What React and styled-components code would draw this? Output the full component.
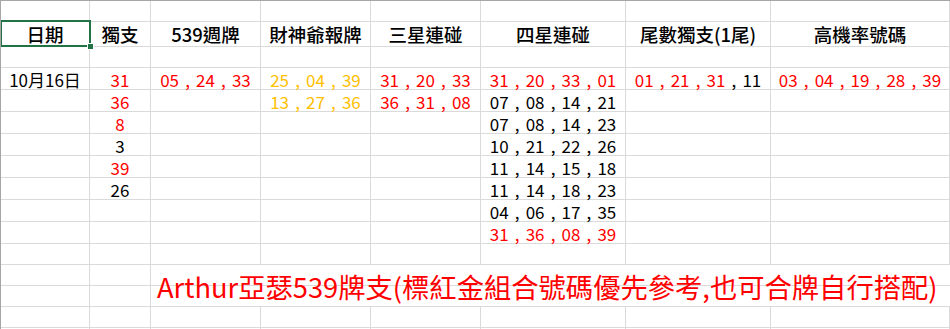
import React from 'react';
import styled, { createGlobalStyle, css } from 'styled-components';

const GlobalStyle = createGlobalStyle`
  html, body {
    margin: 0;
    padding: 0;
    background: #ffffff;
    overflow: hidden;
  }
  body {
    font-family: "Noto Sans CJK TC", "Microsoft JhengHei", sans-serif;
  }
`;

const colors = {
  r: '#ff0000',
  g: '#ffc000',
  k: '#000000',
};

const Sheet = styled.div`
  display: grid;
  grid-template-columns: 89px 61px 110px 110px 110px 145px 145px 1fr;
  grid-template-rows: 21px 25px 21px repeat(8, 22px) 21px 21px 21px 21px 40px;
  width: 950px;
  height: 329px;
  box-sizing: border-box;
  border-top: 1px solid #a6a6a6;
  border-left: 1px solid #a6a6a6;
  overflow: hidden;
`;

const Cell = styled.div`
  position: relative;
  box-sizing: border-box;
  border-right: 1px solid #dadada;
  border-bottom: 1px solid #dadada;
  display: flex;
  align-items: center;
  justify-content: center;
  white-space: nowrap;
  font-size: 17px;
  color: #000;
  line-height: 1;
  padding-top: 1px;

  ${(p) =>
    p.$head &&
    css`
      font-size: 18.5px;
      font-weight: 500;
    `}

  ${(p) =>
    p.$selected &&
    css`
      &::after {
        content: '';
        position: absolute;
        left: -1px;
        top: -2px;
        right: -2px;
        bottom: -1px;
        border: 2px solid #217346;
        pointer-events: none;
      }
      &::before {
        content: '';
        position: absolute;
        right: -5px;
        bottom: -4px;
        width: 5px;
        height: 5px;
        background: #217346;
        border: 1px solid #ffffff;
        z-index: 2;
      }
    `}
`;

const Label = styled.span`
  display: inline-block;
  line-height: 1;
`;

const Banner = styled.div`
  grid-column: 3 / -1;
  grid-row: 13 / span 2;
  box-sizing: border-box;
  border-bottom: 1px solid #dadada;
  background: linear-gradient(
    to bottom,
    transparent 20px,
    #dadada 20px,
    #dadada 21px,
    transparent 21px
  );
  display: flex;
  align-items: center;
  padding: 3px 0 0 6px;
  font-size: 27.3px;
  color: #ff0000;
  white-space: nowrap;
  line-height: 1;
`;

const Num = styled.span`
  display: inline-block;
  color: ${(p) => colors[p.$c]};
`;

const Sep = styled.span`
  display: inline-block;
  width: 1em;
  text-align: center;
  color: ${(p) => colors[p.$c]};
`;

// "r:05,r:24,k:11" style or plain "05,24,33" with one colour
const parse = (str, c = 'k') =>
  str.split(',').map((s) => {
    const [a, b] = s.includes(':') ? s.split(':') : [c, s];
    return { c: a, t: b };
  });

function Nums({ list }) {
  return list.map((n, i) => (
    <React.Fragment key={i}>
      {i > 0 && <Sep $c={n.c}>,</Sep>}
      <Num $c={n.c}>{n.t}</Num>
    </React.Fragment>
  ));
}

const headers = ['日期', '獨支', '539週牌', '財神爺報牌', '三星連碰', '四星連碰', '尾數獨支(1尾)', '高機率號碼'];

const body = [
  ['10月16日', parse('31', 'r'), parse('05,24,33', 'r'), parse('25,04,39', 'g'), parse('31,20,33', 'r'), parse('31,20,33,01', 'r'), parse('r:01,r:21,r:31,k:11'), parse('03,04,19,28,39', 'r')],
  [null, parse('36', 'r'), null, parse('13,27,36', 'g'), parse('36,31,08', 'r'), parse('07,08,14,21'), null, null],
  [null, parse('8', 'r'), null, null, null, parse('07,08,14,23'), null, null],
  [null, parse('3'), null, null, null, parse('10,21,22,26'), null, null],
  [null, parse('39', 'r'), null, null, null, parse('11,14,15,18'), null, null],
  [null, parse('26'), null, null, null, parse('11,14,18,23'), null, null],
  [null, null, null, null, null, parse('04,06,17,35'), null, null],
  [null, null, null, null, null, parse('31,36,08,39', 'r'), null, null],
];

const blankRow = () => Array.from({ length: 8 }, () => null);

export default function App() {
  return (
    <>
      <GlobalStyle />
      <Sheet>
        {blankRow().map((_, i) => (
          <Cell key={'r1' + i} />
        ))}
        {headers.map((h, i) => (
          <Cell key={'h' + i} $head $selected={i === 0}>
            <Label>{h}</Label>
          </Cell>
        ))}
        {blankRow().map((_, i) => (
          <Cell key={'r3' + i} />
        ))}
        {body.map((row, r) =>
          row.map((v, i) => (
            <Cell key={'b' + r + '-' + i}>
              {v == null ? null : typeof v === 'string' ? <Label>{v}</Label> : <Nums list={v} />}
            </Cell>
          ))
        )}
        {blankRow().map((_, i) => (
          <Cell key={'r12' + i} />
        ))}
        <Cell />
        <Cell />
        <Banner>
          <Label>Arthur亞瑟539牌支(標紅金組合號碼優先參考,也可合牌自行搭配)</Label>
        </Banner>
        <Cell />
        <Cell />
        {[15, 16].map((r) =>
          blankRow().map((_, i) => <Cell key={'r' + r + '-' + i} />)
        )}
      </Sheet>
    </>
  );
}
